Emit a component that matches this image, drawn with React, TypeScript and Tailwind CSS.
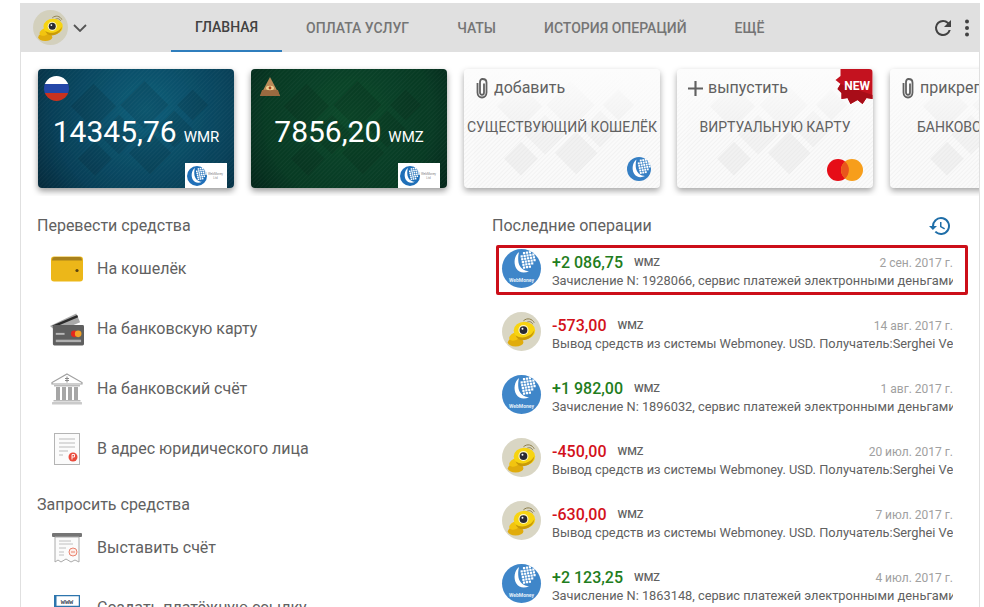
import type { ReactElement, ReactNode } from 'react';

function Diamonds({ light }: { light?: boolean }): ReactElement {
  const fill = light ? '#d4d4d4' : '#000000';
  const dark = light ? '#cacaca' : '#000000';
  return (
    <svg viewBox="0 0 196 119" className="absolute inset-0 h-full w-full" aria-hidden="true">
      <defs>
        <pattern id={light ? 'hatchL' : 'hatchD'} width="3" height="3" patternUnits="userSpaceOnUse" patternTransform="rotate(45)">
          <rect width="1" height="3" fill={light ? '#d4d4d4' : '#ffffff'} opacity={light ? 0.22 : 0.035} />
        </pattern>
      </defs>
      <g transform="rotate(45 98 60)" opacity={light ? 0.2 : 0.1}>
        <rect x="70" y="20" width="34" height="34" fill={fill} />
        <rect x="110" y="-8" width="22" height="22" fill={dark} />
        <rect x="112" y="20" width="26" height="26" fill={fill} />
        <rect x="110" y="52" width="30" height="30" fill={dark} />
        <rect x="76" y="62" width="28" height="28" fill={fill} />
        <rect x="36" y="58" width="32" height="32" fill={dark} />
        <rect x="78" y="98" width="24" height="24" fill={dark} />
      </g>
      <rect width="196" height="119" fill={`url(#${light ? 'hatchL' : 'hatchD'})`} />
    </svg>
  );
}

function Globe({ className, color = '#2f7cc4', round = true }: { className: string; color?: string; round?: boolean }): ReactElement {
  const dots = [];
  for (let i = 0; i < 5; i++) {
    for (let j = 0; j < 6; j++) {
      if (i + j < 1 || i + j > 7 || (i === 4 && j === 0)) continue;
      dots.push(<rect key={`${i}-${j}`} x={10.3 + i * 2.5 + j * 0.5} y={3 + j * 2.4 - i * 0.4} width="1.9" height="1.9" fill="#fff" />);
    }
  }
  return (
    <svg viewBox="0 0 24 24" className={className} aria-hidden="true">
      {round && <circle cx="12" cy="12" r="12" fill={color} />}
      <path d="M9.5 2.5C5.5 5.5 4.5 12 7 16.5C9.5 20.5 14 21 18 19C13.5 19 10 16 9 11.5C8.5 8.5 8.7 5 9.5 2.5Z" fill="#fff" />
      {dots}
    </svg>
  );
}

function Bee({ className, plate }: { className: string; plate: string }): ReactElement {
  return (
    <svg viewBox="0 0 40 40" className={className} aria-hidden="true">
      <circle cx="20" cy="20" r="20" fill={plate} />
      <path d="M22 9C26 5.5 31 7 33 11M25 11C28 9 30.5 10 31.5 12.5" fill="none" stroke="#8a7a45" strokeWidth="1" />
      <ellipse cx="14" cy="31" rx="8" ry="4.5" fill="#e0ac0c" />
      <ellipse cx="13.5" cy="25" rx="6.5" ry="3.8" fill="#f2c40f" transform="rotate(-25 13.5 25)" />
      <ellipse cx="23" cy="19" rx="11" ry="9" fill="#f7d411" />
      <path d="M14 24C20 28 29 26 33 19C33 24 27 29 21 29C18 29 15 27 14 24Z" fill="#c99a08" />
      <circle cx="22" cy="18.5" r="5.2" fill="#fff8c8" />
      <circle cx="22" cy="18.5" r="4" fill="#2a2a33" />
      <circle cx="21" cy="17.2" r="1" fill="#fff" />
    </svg>
  );
}

function Clip(): ReactElement {
  return (
    <svg viewBox="0 0 14 22" className="h-[22px] w-[14px]" fill="none" stroke="#616161" strokeWidth="1.8" aria-hidden="true">
      <path d="M9 6.5V15.5C9 17 8.2 17.8 7 17.8C5.8 17.8 5 17 5 15.5V5C5 3 6 2 7.5 2C9.5 2 11.5 3 11.5 5.5V15.5C11.5 18.5 9.5 20.5 7 20.5C4.5 20.5 2.5 18.5 2.5 15.5V6" />
    </svg>
  );
}

function WalletCard({ bg, flag, value, unit }: { bg: string; flag: ReactNode; value: string; unit: string }): ReactElement {
  return (
    <div className={`relative h-[119px] w-[196px] shrink-0 overflow-hidden rounded-[4px] text-white shadow-[0_3px_6px_rgba(0,0,0,0.4)] ${bg}`}>
      <Diamonds />
      <div className="relative flex h-full flex-col">
        <div className="h-[32px] pl-[6px] pt-[7px]">{flag}</div>
        <div className="flex h-[62px] items-baseline justify-center pt-[7px]">
          <span className="text-[30px] leading-[48px]">{value}</span>
          <span className="ml-[7px] text-[15px] leading-[48px]">{unit}</span>
        </div>
        <div className="flex justify-end pr-[7px]">
          <div className="flex h-[25px] w-[42px] items-center gap-[1px] bg-white pl-[2px]">
            <Globe className="h-[20px] w-[20px]" color="#1f6fb8" />
            <div className="text-center text-[3px] leading-[4px] text-[#888]">
              <div>WebMoney</div>
              <div>Ltd</div>
            </div>
          </div>
        </div>
      </div>
    </div>
  );
}

function AddCard({ icon, action, title, corner, badge }: { icon: ReactNode; action: string; title: string; corner?: ReactNode; badge?: ReactNode }): ReactElement {
  return (
    <div className="relative h-[119px] w-[196px] shrink-0 overflow-hidden rounded-[4px] bg-[#fbfbfb] text-[#616161] shadow-[0_3px_6px_rgba(0,0,0,0.35)]">
      <Diamonds light />
      <div className="absolute inset-x-0 top-0 h-[70px] bg-gradient-to-b from-[#fcfcfc] to-transparent" />
      <div className="relative flex h-full flex-col">
        <div className="flex h-[38px] items-center gap-[5px] pl-[11px] text-[16px]">
          {icon}
          <span className="whitespace-nowrap">{action}</span>
        </div>
        <div className="whitespace-nowrap pt-[10px] text-center text-[14px] leading-[20px]">{title}</div>
        {corner && <div className="mt-auto flex justify-end pb-[7px] pr-[9px]">{corner}</div>}
      </div>
      {badge}
    </div>
  );
}

function MenuRow({ icon, label }: { icon: ReactNode; label: string }): ReactElement {
  return (
    <div className="flex h-[60px] items-center">
      <div className="flex w-[60px] justify-center pr-[1px]">{icon}</div>
      <span className="whitespace-nowrap text-[16px] text-[#616161]">{label}</span>
    </div>
  );
}

const WalletIcon = (
  <svg viewBox="0 0 32 26" className="h-[26px] w-[32px]" aria-hidden="true">
    <rect width="32" height="25" y="0.5" rx="3" fill="#ecb719" />
    <path d="M1 4.5C1 2 2 1 4 1H28C30 1 31 2 31 4.5Z" fill="#a8811c" />
    <circle cx="26" cy="14.5" r="1.6" fill="#5a4410" />
  </svg>
);

const CardsIcon = (
  <svg viewBox="0 0 36 34" className="h-[34px] w-[35px]" aria-hidden="true">
    <path d="M1 14L28 1L32 10L8 20Z" fill="#a9a9a9" />
    <path d="M3.5 13.5L29 2.5L30 5L5 15.5Z" fill="#2b2b2b" />
    <rect x="4" y="13" width="32" height="21" rx="1.5" fill="#5f5f5f" />
    <circle cx="26" cy="22" r="3.4" fill="#e3261d" />
    <circle cx="30" cy="22" r="3.4" fill="#f2a227" />
    <rect x="7" y="28" width="26" height="2.5" fill="#b0b0b0" />
    <rect x="7" y="21" width="9" height="2" fill="#b8b8b8" />
  </svg>
);

const BankIcon = (
  <svg viewBox="0 0 32 32" className="h-[32px] w-[32px]" aria-hidden="true">
    <path d="M16 1L31 9.5V11H1V9.5Z" fill="#fff" stroke="#a0a0a0" strokeWidth="1.2" />
    <path d="M16 3.5V9.5M14 5.5H18M14 7.5H18" stroke="#888" strokeWidth="1" />
    <rect x="3" y="12" width="26" height="1.5" fill="#bbb" />
    <rect x="5" y="14" width="4" height="13" fill="#a6a6a6" />
    <rect x="11" y="14" width="4" height="13" fill="#a6a6a6" />
    <rect x="17" y="14" width="4" height="13" fill="#a6a6a6" />
    <rect x="23" y="14" width="4" height="13" fill="#a6a6a6" />
    <rect x="2.5" y="27" width="27" height="1.5" fill="#bbb" />
    <rect x="1" y="29" width="30" height="2.5" rx="0.5" fill="#cacaca" />
  </svg>
);

const DocIcon = (
  <svg viewBox="0 0 26 32" className="h-[32px] w-[26px]" aria-hidden="true">
    <rect x="0.5" y="0.5" width="25" height="31" fill="#fbfbfb" stroke="#b4b4b4" />
    <path d="M5 6H21M5 10H21M5 14H21M5 18H14M5 22H9" stroke="#bbb" strokeWidth="1" />
    <circle cx="19" cy="24" r="4.5" fill="#ea4b3c" />
    <path d="M18 26.5V21.5H20.5V24H18" fill="none" stroke="#fff" strokeWidth="0.9" />
  </svg>
);

const InvoiceIcon = (
  <svg viewBox="0 0 32 32" className="h-[32px] w-[32px]" aria-hidden="true">
    <rect x="1" y="1" width="30" height="4" rx="1" fill="#757575" />
    <path d="M4 5H28V30L24 28L20 30L15 27L10 30L7 28L4 30Z" fill="#fbfbfb" stroke="#aaa" />
    <path d="M8 9H20M8 12H22M8 16H15M8 20H13M8 23H13" stroke="#c0c0c0" />
    <circle cx="22" cy="20" r="4" fill="#fdeee9" stroke="#e9826e" />
    <path d="M20 20H24" stroke="#e9826e" />
  </svg>
);

const LinkIcon = (
  <svg viewBox="0 0 26 26" className="h-[26px] w-[26px]" aria-hidden="true">
    <rect x="0.5" y="0.5" width="25" height="11" fill="#fff" stroke="#2d75ad" strokeWidth="1.5" />
    <rect y="0" width="2.5" height="12" fill="#2d75ad" />
    <text x="13" y="9" textAnchor="middle" fontFamily="'Liberation Mono', monospace" fontSize="7" fontWeight="700" fill="#3a4a58">www</text>
    <rect y="14" width="26" height="3" fill="#2d75ad" />
    <rect y="19" width="26" height="3" fill="#2d75ad" />
  </svg>
);

function Operation({ amount, plus, date, text, boxed }: { amount: string; plus?: boolean; date: string; text: string; boxed?: boolean }): ReactElement {
  return (
    <div className={`flex h-[50px] w-[472px] shrink-0 rounded-[2px] border-[3px] pl-[3px] pr-[12px] ${boxed ? 'border-[#cc0f19]' : 'border-transparent'}`}>
      {plus ? (
        <div className="mt-px flex h-[39px] w-[39px] shrink-0 flex-col items-center overflow-hidden rounded-full bg-[#3f86c9]">
          <Globe className="h-[28px] w-[28px]" color="#3f86c9" round={false} />
          <span className="text-[5px] font-bold leading-[7px] text-[#e4eef8]">WebMoney</span>
        </div>
      ) : (
        <Bee className="mt-px h-[39px] w-[39px] shrink-0" plate="#d9d6c4" />
      )}
      <div className="ml-[11px] min-w-0 flex-1">
        <div className="box-border flex h-[24px] items-center pt-[5px]">
          <span className={`text-[16px] font-medium ${plus ? 'text-[#1f7d20]' : 'text-[#d3111b]'}`}>{amount}</span>
          <span className="ml-[11px] mt-[2px] text-[11px] font-medium text-[#616161]">WMZ</span>
          <span className="ml-auto whitespace-nowrap text-[12px] text-[#a0a0a0]">{date}</span>
        </div>
        <div className="overflow-hidden whitespace-nowrap text-[12.8px] leading-[18px] text-[#616161]">{text}</div>
      </div>
    </div>
  );
}

const IN_TEXT = ' сервис платежей электронными деньгами WebMoney Transfer';
const OUT_TEXT = 'Вывод средств из системы Webmoney. USD. Получатель:Serghei Ve';

function App(): ReactElement {
  return (
    <div className="h-[607px] w-[984px] overflow-hidden bg-white pl-5 pt-[3px] font-['Roboto',sans-serif]">
      <div className="h-[604px] w-[960px] overflow-hidden border-x border-[#e0e0e0]">
        <header className="flex h-[49px] items-center bg-[#e0e0e0]">
          <Bee className="ml-[12px] h-[35px] w-[35px]" plate="#d3d0bd" />
          <svg viewBox="0 0 14 8" className="ml-[5px] h-[8px] w-[14px]" fill="none" stroke="#555" strokeWidth="1.8" aria-hidden="true">
            <path d="M1 1L7 7L13 1" />
          </svg>
          <nav className="ml-[84px] flex h-full text-[14px] font-medium text-[#757575]">
            <div className="flex items-center border-b-2 border-[#2f7ebd] px-6 pt-[2px] text-[#424242]">ГЛАВНАЯ</div>
            <div className="flex items-center px-6 pt-[1px]">ОПЛАТА УСЛУГ</div>
            <div className="flex items-center px-6 pt-[1px]">ЧАТЫ</div>
            <div className="flex items-center px-6 pt-[1px]">ИСТОРИЯ ОПЕРАЦИЙ</div>
            <div className="flex items-center px-6 pt-[1px]">ЕЩЁ</div>
          </nav>
          <svg viewBox="0 0 24 24" className="ml-auto h-[24px] w-[24px]" fill="#424242" aria-hidden="true">
            <path d="M17.65 6.35A7.96 7.96 0 0 0 12 4a8 8 0 1 0 7.73 10h-2.08A6 6 0 1 1 12 6c1.66 0 3.14.69 4.22 1.78L13 11h7V4z" />
          </svg>
          <svg viewBox="0 0 4 18" className="ml-[10px] mr-[10px] h-[18px] w-[4px]" fill="#424242" aria-hidden="true">
            <circle cx="2" cy="2.5" r="2" />
            <circle cx="2" cy="9" r="2" />
            <circle cx="2" cy="15.5" r="2" />
          </svg>
        </header>

        <div className="flex gap-[17px] overflow-hidden pb-[8px] pl-[17px] pt-[17px]">
          <WalletCard
            bg="bg-[radial-gradient(circle_at_55%_35%,#0e5f7a,#084058_70%,#05293a)]"
            value="14345,76"
            unit="WMR"
            flag={
              <div className="flex h-[25px] w-[25px] flex-col overflow-hidden rounded-full">
                <div className="h-1/3 bg-white" />
                <div className="h-1/3 bg-[#2447a8]" />
                <div className="h-1/3 bg-[#c8321f]" />
              </div>
            }
          />
          <WalletCard
            bg="bg-[radial-gradient(circle_at_50%_40%,#0c4a2b,#083a24_70%,#04261a)]"
            value="7856,20"
            unit="WMZ"
            flag={
              <svg viewBox="0 0 24 24" className="ml-[1px] h-[24px] w-[24px]" aria-hidden="true">
                <path d="M12 1L22 20H2Z" fill="#b98a58" />
                <path d="M4 14L20 14L22 20H2Z" fill="#9a6a40" />
                <ellipse cx="12" cy="12" rx="4" ry="2.2" fill="#f0d090" />
                <circle cx="12" cy="12" r="1.4" fill="#a3401f" />
              </svg>
            }
          />
          <AddCard
            icon={<Clip />}
            action="добавить"
            title="СУЩЕСТВУЮЩИЙ КОШЕЛЁК"
            corner={<Globe className="h-[24px] w-[24px]" color="#357fc4" />}
          />
          <AddCard
            icon={
              <svg viewBox="0 0 14 14" className="h-[15px] w-[15px]" fill="#616161" aria-hidden="true">
                <path d="M6 0H8V6H14V8H8V14H6V8H0V6H6Z" />
              </svg>
            }
            action="выпустить"
            title="ВИРТУАЛЬНУЮ КАРТУ"
            corner={
              <svg viewBox="0 0 36 22" className="mr-px h-[22px] w-[36px]" aria-hidden="true">
                <circle cx="11" cy="11" r="11" fill="#e60d17" />
                <circle cx="25" cy="11" r="11" fill="#f79e1b" />
                <path d="M18 2.6a11 11 0 0 1 0 16.8a11 11 0 0 1 0-16.8Z" fill="#e9561c" />
              </svg>
            }
            badge={
              <div className="absolute right-0 top-0 h-[35px] w-[38px]">
                <svg viewBox="0 0 37 35" className="absolute inset-0 h-full w-full" aria-hidden="true">
                  <path d="M5 0H37V30L31 29L27 35L22 31L15 35L12 29L6 30L6 24L2 20L5 15L0 11L5 7Z" fill="#c4121f" />
                  <path d="M5 15L37 26V30L31 29L27 35L22 31L15 35L12 29L6 30L6 24L2 20Z" fill="#a80d18" />
                </svg>
                <span className="absolute right-[3px] top-[10px] text-[12px] font-bold leading-[14px] text-white">NEW</span>
              </div>
            }
          />
          <AddCard icon={<Clip />} action="прикрепить" title="БАНКОВСКУЮ КАРТУ" />
        </div>

        <div className="flex">
          <section className="w-[455px] shrink-0 pl-[16px] pt-[18px]">
            <h2 className="text-[16px] font-normal leading-[24px] text-[#616161]">Перевести средства</h2>
            <div className="mt-[1px]">
              <MenuRow icon={WalletIcon} label="На кошелёк" />
              <MenuRow icon={CardsIcon} label="На банковскую карту" />
              <MenuRow icon={BankIcon} label="На банковский счёт" />
              <MenuRow icon={DocIcon} label="В адрес юридического лица" />
            </div>
            <h2 className="mt-[14px] text-[16px] font-normal leading-[24px] text-[#616161]">Запросить средства</h2>
            <div className="mt-[1px]">
              <MenuRow icon={InvoiceIcon} label="Выставить счёт" />
              <MenuRow icon={LinkIcon} label="Создать платёжную ссылку" />
            </div>
          </section>

          <section className="min-w-0 flex-1 pt-[18px]">
            <div className="flex h-[24px] items-center pl-[16px] pr-[27px]">
              <h2 className="text-[16px] font-normal text-[#616161]">Последние операции</h2>
              <svg viewBox="0 0 24 24" className="ml-auto h-[24px] w-[24px]" fill="#1f6ea8" aria-hidden="true">
                <path d="M13 3a9 9 0 0 0-9 9H1l3.9 3.9L9 12H6a7 7 0 1 1 2.05 4.95l-1.42 1.42A9 9 0 1 0 13 3zm-1 5v5l4.25 2.52.77-1.28-3.52-2.09V8z" />
              </svg>
            </div>
            <div className="ml-[20px] mt-[7px] flex flex-col gap-[13px]">
              <Operation boxed plus amount="+2 086,75" date="2 сен. 2017 г." text={`Зачисление N: 1928066,${IN_TEXT}`} />
              <Operation amount="-573,00" date="14 авг. 2017 г." text={OUT_TEXT} />
              <Operation plus amount="+1 982,00" date="1 авг. 2017 г." text={`Зачисление N: 1896032,${IN_TEXT}`} />
              <Operation amount="-450,00" date="20 июл. 2017 г." text={OUT_TEXT} />
              <Operation amount="-630,00" date="7 июл. 2017 г." text={OUT_TEXT} />
              <Operation plus amount="+2 123,25" date="4 июл. 2017 г." text={`Зачисление N: 1863148,${IN_TEXT}`} />
            </div>
          </section>
        </div>
      </div>
    </div>
  );
}

export default App;
